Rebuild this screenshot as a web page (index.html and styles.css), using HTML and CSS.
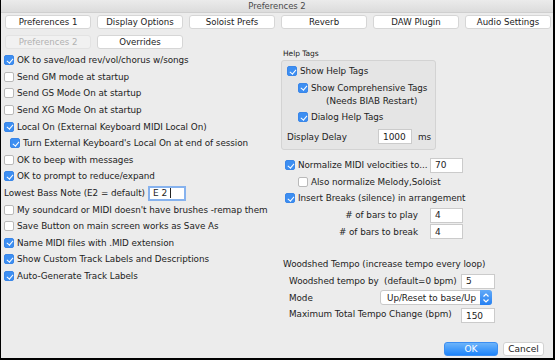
FILE: index.html
```html
<!DOCTYPE html>
<html lang="en">
  <head>
    <meta charset="UTF-8" />
    <title>Preferences 2</title>
    <link rel="stylesheet" href="styles.css">
  </head>
  <body>
    <div class="window">
      <div class="titlebar">Preferences 2</div>
      <div class="tabs">
        <button class="tab">Preferences 1</button>
        <button class="tab">Display Options</button>
        <button class="tab">Soloist Prefs</button>
        <button class="tab">Reverb</button>
        <button class="tab">DAW Plugin</button>
        <button class="tab">Audio Settings</button>
        <button class="tab disabled">Preferences 2</button>
        <button class="tab">Overrides</button>
      </div>
      <div class="main">
        <div class="left">
          <div class="row"><span class="cb on"></span>OK to save/load rev/vol/chorus w/songs</div>
          <div class="row"><span class="cb"></span>Send GM mode at startup</div>
          <div class="row"><span class="cb"></span>Send GS Mode On at startup</div>
          <div class="row"><span class="cb"></span>Send XG Mode On at startup</div>
          <div class="row"><span class="cb on"></span>Local On (External Keyboard MIDI Local On)</div>
          <div class="row indent"><span class="cb on"></span>Turn External Keyboard's Local On at end of session</div>
          <div class="row"><span class="cb"></span>OK to beep with messages</div>
          <div class="row"><span class="cb on"></span>OK to prompt to reduce/expand</div>
          <div class="row">Lowest Bass Note (E2 = default)<span class="field focus">E 2<span class="caret"></span></span></div>
          <div class="row"><span class="cb"></span>My soundcard or MIDI doesn't have brushes -remap them</div>
          <div class="row"><span class="cb"></span>Save Button on main screen works as Save As</div>
          <div class="row"><span class="cb on"></span>Name MIDI files with .MID extension</div>
          <div class="row"><span class="cb on"></span>Show Custom Track Labels and Descriptions</div>
          <div class="row"><span class="cb on"></span>Auto-Generate Track Labels</div>
        </div>
        <div class="right">
          <div class="group-label">Help Tags</div>
          <div class="group">
            <div class="row"><span class="cb on"></span>Show Help Tags</div>
            <div class="row indent2"><span class="cb on"></span>Show Comprehensive Tags</div>
            <div class="note">(Needs BIAB Restart)</div>
            <div class="row indent2"><span class="cb on"></span>Dialog Help Tags</div>
            <div class="row delay">
              <span class="delay-label">Display Delay</span>
              <span class="field w34">1000</span>
              <span class="unit">ms</span>
            </div>
          </div>
          <div class="row normalize"><span class="cb on"></span>Normalize MIDI velocities to...<span class="field w32 push">70</span></div>
          <div class="row indent3"><span class="cb"></span>Also normalize Melody,Soloist</div>
          <div class="row first-in"><span class="cb on"></span>Insert Breaks (silence) in arrangement</div>
          <div class="row"><span class="bars-label">#&nbsp;of bars to play</span><span class="field w32">4</span></div>
          <div class="row"><span class="bars-label">#&nbsp;of bars to break</span><span class="field w32">4</span></div>
          <div class="section-title">Woodshed Tempo (increase tempo every loop)</div>
          <div class="row wood">Woodshed tempo by&nbsp; (default=0 bpm)<span class="field w34 push">5</span></div>
          <div class="row wood">
            <span class="mode-label">Mode</span>
            <span class="select">Up/Reset to base/Up<span class="stepper">
              <svg width="8" height="12" viewBox="0 0 8 12"><path d="M1.5 4.5 L4 2 L6.5 4.5 M1.5 7.5 L4 10 L6.5 7.5" fill="none" stroke="#fff" stroke-width="1.2"/></svg>
            </span></span>
          </div>
          <div class="row wood">Maximum Total Tempo Change (bpm)<span class="field w34 push low">150</span></div>
        </div>
      </div>
      <div class="footer">
        <button class="btn ok">OK</button>
        <button class="btn">Cancel</button>
      </div>
    </div>
  </body>
</html>
```

FILE: styles.css
```css
* {
  box-sizing: border-box;
  margin: 0;
}
body {
  width: 555px;
  height: 360px;
  background: #ececec;
  font-family: "DejaVu Sans", "Liberation Sans", sans-serif;
  font-size: 8.8px;
  letter-spacing: -0.05px;
  color: #222;
}
.window {
  display: flex;
  flex-direction: column;
  height: 360px;
  border-left: 1px solid #000;
  border-right: 2px solid #000;
  border-bottom: 2px solid #000;
  background: #ececec;
}
.titlebar {
  height: 13px;
  line-height: 12px;
  text-align: center;
  font-size: 8.5px;
  color: #4a4a4a;
  background: linear-gradient(#ebebeb, #dcdcdc);
  border-bottom: 1px solid #cfcfcf;
}
.tabs {
  display: grid;
  grid-template-columns: repeat(6, 86px);
  column-gap: 6px;
  row-gap: 6px;
  padding: 2px 0 0 4px;
}
.tab {
  height: 14px;
  padding: 0;
  font-family: inherit;
  font-size: 8.6px;
  color: #222;
  background: #fff;
  border: 1px solid #d6d6d6;
  border-radius: 3px;
}
.tab.disabled {
  background: #f1f1f1;
  color: #b2b2b2;
  border-color: #e3e3e3;
}
.main {
  display: flex;
  flex: 1;
}
.left {
  width: 280px;
  padding: 3px 0 0 3px;
}
.row {
  display: flex;
  align-items: center;
  height: 16.6px;
  white-space: nowrap;
}
.cb {
  position: relative;
  flex: none;
  width: 10px;
  height: 10px;
  margin-right: 3px;
  border: 1px solid #b9b9b9;
  border-radius: 2px;
  background: #fff;
}
.cb.on {
  background: #3c8ef2;
  border-color: #3a86e8;
}
.cb.on::after {
  content: "";
  position: absolute;
  left: 2.6px;
  top: 0.6px;
  width: 2.5px;
  height: 5px;
  border: solid #fff;
  border-width: 0 1.4px 1.4px 0;
  transform: rotate(40deg);
}
.indent {
  padding-left: 6px;
}
.field {
  display: inline-flex;
  align-items: center;
  flex: none;
  height: 15px;
  padding-left: 4px;
  background: #fff;
  border: 1px solid #cbcbcb;
  font-size: 9px;
}
.field.focus {
  width: 38px;
  margin-left: 3px;
  border: 2px solid #86b2ee;
  padding-left: 3px;
}
.caret {
  width: 1px;
  height: 10px;
  margin-left: 3px;
  background: #222;
}
.w32 {
  width: 33px;
}
.w34 {
  width: 34px;
}
.push {
  margin-left: auto;
}
.low {
  margin-top: 3px;
}
.right {
  width: 270px;
}
.group-label {
  height: 10px;
  line-height: 10px;
  margin: 0 0 1px 2px;
  font-size: 7.5px;
}
.group {
  width: 155px;
  height: 90px;
  padding: 2px 0 0 5px;
  background: #e5e5e5;
  border: 1px solid #d3d3d3;
  border-radius: 3px;
}
.indent2 {
  padding-left: 11px;
}
.note {
  height: 13px;
  line-height: 10px;
  padding-left: 39px;
}
.row.delay {
  height: 18px;
  margin-top: 2px;
}
.delay-label {
  width: 91px;
}
.unit {
  margin-left: 6px;
}
.normalize {
  width: 182px;
  margin-top: 7px;
  padding-left: 4px;
}
.indent3 {
  padding-left: 17px;
}
.first-in {
  padding-left: 4px;
}
.bars-label {
  width: 137px;
  margin-right: 12px;
  text-align: right;
}
.section-title {
  height: 17px;
  line-height: 17px;
  margin: 16px 0 0 2px;
}
.wood {
  width: 214px;
  padding-left: 8px;
}
.mode-label {
  width: 91px;
}
.select {
  position: relative;
  display: inline-flex;
  align-items: center;
  width: 112px;
  height: 15px;
  padding-left: 6px;
  background: #fff;
  border: 1px solid #c9c9c9;
  border-radius: 3px;
}
.stepper {
  position: absolute;
  right: -1px;
  top: -1px;
  display: flex;
  align-items: center;
  justify-content: center;
  width: 12px;
  height: 15px;
  background: linear-gradient(#62aaf8, #2580f2);
  border-radius: 0 3px 3px 0;
}
.footer {
  display: flex;
  justify-content: flex-end;
  gap: 5px;
  padding: 0 9px 0 0;
  height: 16px;
}
.btn {
  width: 41px;
  height: 14px;
  padding: 0;
  font-family: inherit;
  font-size: 9px;
  color: #222;
  background: #fff;
  border: 1px solid #d2d2d2;
  border-radius: 3px;
}
.btn.ok {
  width: 54px;
  color: #fff;
  background: linear-gradient(#6db4fa, #1e84fa);
  border-color: #3b8ef2;
}
```
